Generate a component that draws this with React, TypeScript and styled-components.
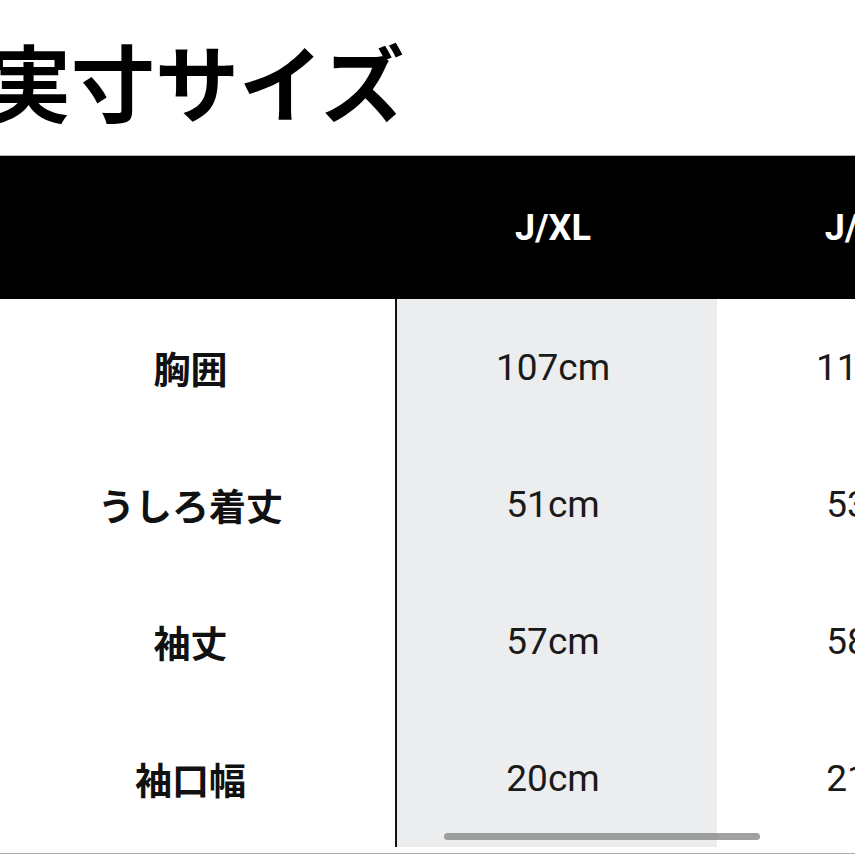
import styled, { createGlobalStyle } from "styled-components";

const sizes = ["J/XL", "J/2XL", "J/3XL"];

const rows = [
  { label: "胸囲", values: ["107cm", "113cm", "119cm"] },
  { label: "うしろ着丈", values: ["51cm", "53cm", "55cm"] },
  { label: "袖丈", values: ["57cm", "58cm", "59cm"] },
  { label: "袖口幅", values: ["20cm", "21cm", "22cm"] },
];

const App = () => {
  return (
    <Page>
      <GlobalStyle />
      <Title>実寸サイズ</Title>
      <TableWrap>
        <Table>
          <HeadCell />
          {sizes.map((size) => (
            <HeadCell key={size}>{size}</HeadCell>
          ))}
          {rows.map((row) => (
            <Row key={row.label}>
              <LabelCell>{row.label}</LabelCell>
              {row.values.map((value, i) => (
                <ValueCell key={i} $highlight={i === 0}>
                  {value}
                </ValueCell>
              ))}
            </Row>
          ))}
        </Table>
        <ScrollThumb />
      </TableWrap>
    </Page>
  );
};

const GlobalStyle = createGlobalStyle`
  html, body {
    margin: 0;
    padding: 0;
    background: #ffffff;
    overflow: hidden;
  }
`;

const Page = styled.div`
  width: 855px;
  height: 855px;
  overflow: hidden;
  background: #ffffff;
`;

const Title = styled.h1`
  margin: 0 0 0 -13px;
  padding-top: 38px;
  height: 155px;
  box-sizing: border-box;
  font-family: "Noto Sans CJK JP", sans-serif;
  font-weight: 700;
  font-size: 84px;
  line-height: 1;
  color: #000000;
  white-space: nowrap;
`;

const TableWrap = styled.div`
  position: relative;
  width: 855px;
  overflow: hidden;
  border-top: 1px solid #b4b4b4;
  border-bottom: 1px solid #a9a9a9;
  padding-bottom: 6px;
`;

const Table = styled.div`
  display: grid;
  grid-template-columns: 397px repeat(3, 320px);
  grid-template-rows: 143px;
  grid-auto-rows: 137px;
  width: max-content;
`;

const Row = styled.div`
  display: contents;
`;

const HeadCell = styled.div`
  display: flex;
  align-items: center;
  justify-content: center;
  padding-right: 8px;
  background: #000000;
  color: #ffffff;
  font-family: Roboto, "Liberation Sans", sans-serif;
  font-weight: 700;
  font-size: 36px;
`;

const LabelCell = styled.div`
  display: flex;
  align-items: center;
  justify-content: center;
  padding-right: 14px;
  border-right: 2px solid #111111;
  font-family: "Noto Sans CJK JP", sans-serif;
  font-weight: 700;
  font-size: 37px;
  color: #111111;
`;

const ValueCell = styled.div<{ $highlight: boolean }>`
  display: flex;
  align-items: center;
  justify-content: center;
  padding-right: 8px;
  background: ${(props) => (props.$highlight ? "#ebedef" : "#ffffff")};
  font-family: Roboto, "Liberation Sans", sans-serif;
  font-weight: 400;
  font-size: 37px;
  color: #1a1a1a;
`;

const ScrollThumb = styled.div`
  position: absolute;
  left: 444px;
  bottom: 13px;
  width: 316px;
  height: 7px;
  border-radius: 4px;
  background: rgba(130, 130, 130, 0.75);
`;

export default App;
